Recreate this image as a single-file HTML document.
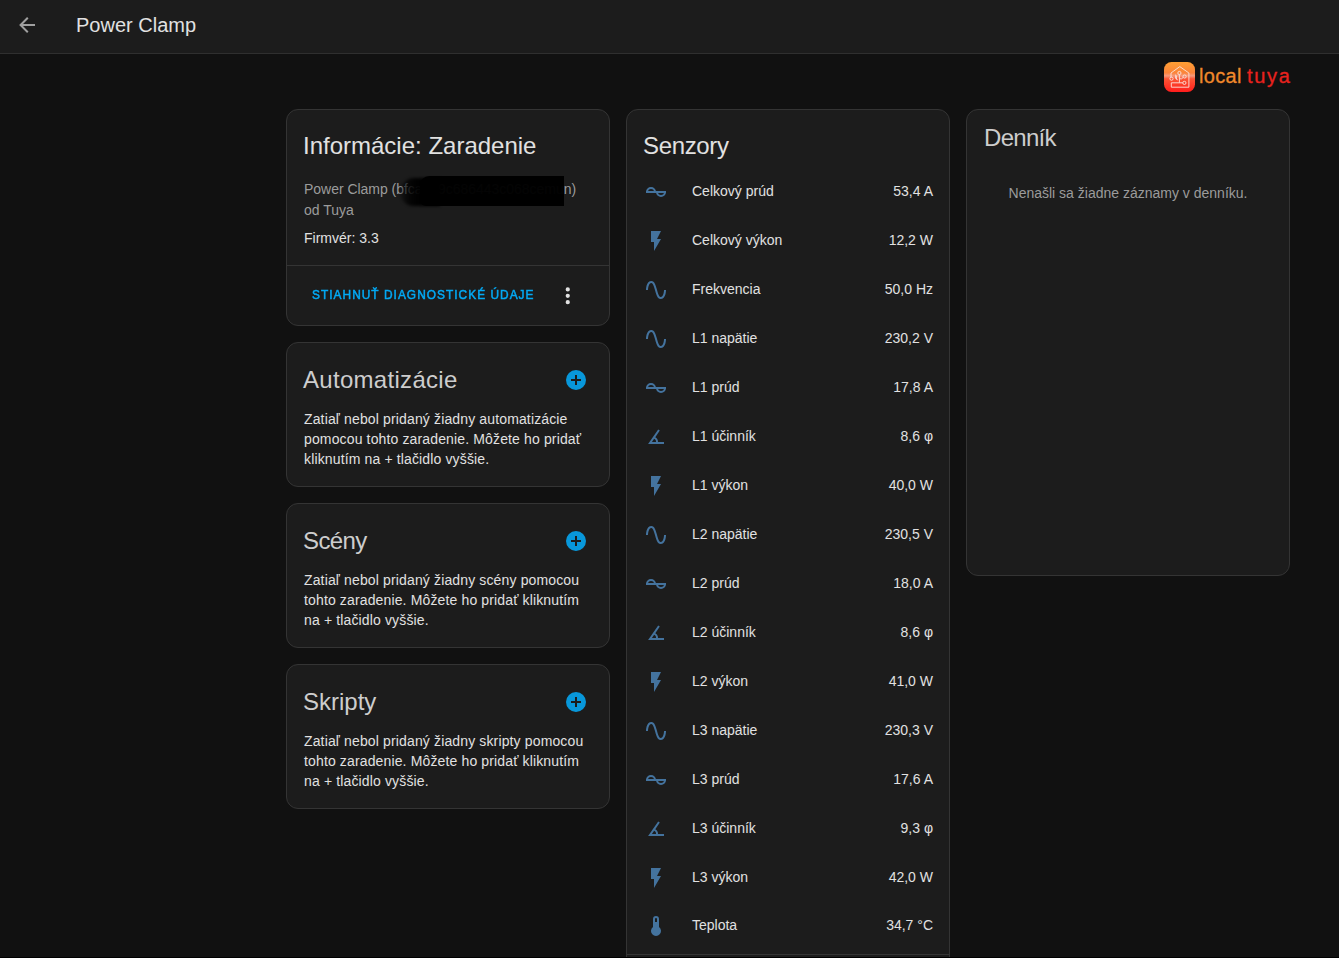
<!DOCTYPE html>
<html><head><meta charset="utf-8">
<style>
html,body{margin:0;padding:0;}
body{width:1339px;height:959px;overflow:hidden;background:#111111;position:relative;font-family:"Liberation Sans",sans-serif;color:#e1e1e1;}
.a{position:absolute;}
.t{position:absolute;white-space:nowrap;line-height:1;}
.hdr{position:absolute;left:0;top:0;width:1339px;height:53px;background:#1c1c1c;border-bottom:1px solid #2f2f2f;}
.card{position:absolute;box-sizing:border-box;background:#1c1c1c;border:1px solid #343434;border-radius:12px;width:324px;}
.h24{font-size:24px;}
.s14{font-size:14px;}
.bd{letter-spacing:0.14px;}
.sec{color:#9b9b9b;}
.gh{color:#cdcdcd;}
.ico{position:absolute;width:24px;height:24px;fill:#44739e;}
</style></head><body>

<div class="hdr"></div>
<svg class="a" style="left:15px;top:13px;width:24px;height:24px;fill:#a0a0a0" viewBox="0 0 24 24"><path d="M20,11V13H8L13.5,18.5L12.08,19.92L4.16,12L12.08,4.08L13.5,5.5L8,11H20Z"/></svg>
<div class="t" style="left:76px;top:15px;font-size:20px;color:#e1e1e1">Power Clamp</div>

<!-- local tuya logo -->
<svg class="a" style="left:1164px;top:62px;width:31px;height:30px" viewBox="0 0 31 30">
<defs>
<linearGradient id="lg" x1="0" y1="0" x2="0" y2="1">
<stop offset="0" stop-color="#ffa034"/>
<stop offset="0.36" stop-color="#fb843a"/>
<stop offset="0.46" stop-color="#f69a7c"/>
<stop offset="0.56" stop-color="#fb5634"/>
<stop offset="1" stop-color="#ff1c1c"/>
</linearGradient>
</defs>
<rect x="0" y="0" width="31" height="30" rx="7.5" fill="url(#lg)"/>
<g fill="none" stroke="#fbe3dc" stroke-width="0.9">
<path d="M7 15.5 V11 L15.8 4.6 L24.9 11 V25.2 H7.3 V20.8 H18.8"/>
<path d="M15.4 12.6 V20.6"/>
<path d="M15.4 16.8 L17.6 16.8 L19.2 15.4"/>
<circle cx="15.4" cy="11" r="1.6"/>
<circle cx="20.6" cy="14.5" r="1.6"/>
<circle cx="20.4" cy="20.9" r="1.6"/>
<circle cx="7.5" cy="16.7" r="1.6"/>
</g>
<path d="M11.2 12.2 C12.6 13 13.2 14.2 12.8 15.2 C12.6 16 13.4 17.2 14.2 18.4 C12.6 18 11.6 17.2 11.2 16 C11 14.8 11.6 13.6 11.2 12.2 Z" fill="#fbe3dc"/>
</svg>
<div class="t" style="left:1199px;top:66px;font-size:20px;color:#f0892b;-webkit-text-stroke:0.3px #f0892b;letter-spacing:0.3px">local</div>
<div class="t" style="left:1247px;top:66px;font-size:20px;color:#e8221e;-webkit-text-stroke:0.3px #e8221e;letter-spacing:1.7px">tuya</div>

<!-- Column 1 -->
<div class="card" style="left:286px;top:109px;height:217px"></div>
<div class="t h24" style="left:303px;top:134px">Informácie: Zaradenie</div>
<div class="t s14 sec" style="left:304px;top:182px;letter-spacing:-0.03px">Power Clamp (bfca319c686443c068cemun)</div>
<div class="a" style="left:400px;top:178px;width:40px;height:28px;background:linear-gradient(to right,rgba(0,0,0,0.25),rgba(0,0,0,0.8) 9px,rgba(0,0,0,0.97) 18px);border-radius:15px 0 0 14px;filter:blur(1.5px)"></div>
<div class="a" style="left:420px;top:176px;width:144px;height:30px;background:rgba(0,0,0,0.975);border-radius:9px 0 0 6px"></div>
<div class="t s14 sec" style="left:304px;top:203px">od Tuya</div>
<div class="t s14" style="left:304px;top:231px">Firmvér: 3.3</div>
<div class="a" style="left:287px;top:265px;width:322px;height:1px;background:#343434"></div>
<div class="t" style="left:312px;top:288px;font-size:13.5px;letter-spacing:1.17px;color:#03a9f4;-webkit-text-stroke:0.55px #03a9f4;transform:scaleX(0.88);transform-origin:0 0">STIAHNUŤ DIAGNOSTICKÉ ÚDAJE</div>
<svg class="a" style="left:555.25px;top:282.75px;width:25.5px;height:25.5px;fill:#e1e1e1" viewBox="0 0 24 24"><path d="M12,16A2,2 0 0,1 14,18A2,2 0 0,1 12,20A2,2 0 0,1 10,18A2,2 0 0,1 12,16M12,10A2,2 0 0,1 14,12A2,2 0 0,1 12,14A2,2 0 0,1 10,12A2,2 0 0,1 12,10M12,4A2,2 0 0,1 14,6A2,2 0 0,1 12,8A2,2 0 0,1 10,6A2,2 0 0,1 12,4Z"/></svg>

<div class="card" style="left:286px;top:342px;height:145px"></div>
<div class="t h24 gh" style="left:303px;top:368px;letter-spacing:0.3px">Automatizácie</div>
<svg class="a" style="left:564px;top:368px;width:24px;height:24px;fill:#0897da" viewBox="0 0 24 24"><path d="M17,13H13V17H11V13H7V11H11V7H13V11H17M12,2A10,10 0 0,0 2,12A10,10 0 0,0 12,22A10,10 0 0,0 22,12A10,10 0 0,0 12,2Z"/></svg>
<div class="t s14 bd" style="left:304px;top:412px">Zatiaľ nebol pridaný žiadny automatizácie</div>
<div class="t s14 bd" style="left:304px;top:432px">pomocou tohto zaradenie. Môžete ho pridať</div>
<div class="t s14 bd" style="left:304px;top:452px">kliknutím na + tlačidlo vyššie.</div>

<div class="card" style="left:286px;top:503px;height:145px"></div>
<div class="t h24 gh" style="left:303px;top:529px;letter-spacing:-0.6px">Scény</div>
<svg class="a" style="left:564px;top:529px;width:24px;height:24px;fill:#0897da" viewBox="0 0 24 24"><path d="M17,13H13V17H11V13H7V11H11V7H13V11H17M12,2A10,10 0 0,0 2,12A10,10 0 0,0 12,22A10,10 0 0,0 22,12A10,10 0 0,0 12,2Z"/></svg>
<div class="t s14 bd" style="left:304px;top:573px">Zatiaľ nebol pridaný žiadny scény pomocou</div>
<div class="t s14 bd" style="left:304px;top:593px">tohto zaradenie. Môžete ho pridať kliknutím</div>
<div class="t s14 bd" style="left:304px;top:613px">na + tlačidlo vyššie.</div>

<div class="card" style="left:286px;top:664px;height:145px"></div>
<div class="t h24 gh" style="left:303px;top:690px">Skripty</div>
<svg class="a" style="left:564px;top:690px;width:24px;height:24px;fill:#0897da" viewBox="0 0 24 24"><path d="M17,13H13V17H11V13H7V11H11V7H13V11H17M12,2A10,10 0 0,0 2,12A10,10 0 0,0 12,22A10,10 0 0,0 22,12A10,10 0 0,0 12,2Z"/></svg>
<div class="t s14 bd" style="left:304px;top:734px">Zatiaľ nebol pridaný žiadny skripty pomocou</div>
<div class="t s14 bd" style="left:304px;top:754px">tohto zaradenie. Môžete ho pridať kliknutím</div>
<div class="t s14 bd" style="left:304px;top:774px">na + tlačidlo vyššie.</div>

<!-- Column 2: Senzory -->
<div class="card" style="left:626px;top:109px;height:880px"></div>
<div class="t h24" style="left:643px;top:134px;letter-spacing:-0.35px">Senzory</div>
<svg class="ico" style="left:644px;top:180px" viewBox="0 0 24 24"><path d="M2 12H22" stroke="#44739e" stroke-width="2" fill="none"/><path d="M3 12A4 4 0 0 1 11 12" stroke="#44739e" stroke-width="2" fill="none"/><path d="M13 12A4 4 0 0 0 21 12" stroke="#44739e" stroke-width="2" fill="none"/></svg>
<div class="t s14" style="left:692px;top:184px">Celkový prúd</div>
<div class="t s14" style="right:406px;top:184px">53,4 A</div>
<svg class="ico" style="left:644px;top:229px" viewBox="0 0 24 24"><path d="M7,2V13H10V22L17,10H13L17,2H7Z"/></svg>
<div class="t s14" style="left:692px;top:233px">Celkový výkon</div>
<div class="t s14" style="right:406px;top:233px">12,2 W</div>
<svg class="ico" style="left:644px;top:278px" viewBox="0 0 24 24"><path d="M16.5,21C13.5,21 12.31,16.76 11.05,12.28C10.14,9.04 9,5 7.5,5C4.11,5 4,11.93 4,12H2C2,11.63 2.06,3 7.5,3C10.5,3 11.71,7.25 12.97,11.74C13.83,14.8 15,19 16.5,19C19.94,19 20.03,12.07 20.03,12H22.03C22.03,12.37 21.97,21 16.5,21Z"/></svg>
<div class="t s14" style="left:692px;top:282px">Frekvencia</div>
<div class="t s14" style="right:406px;top:282px">50,0 Hz</div>
<svg class="ico" style="left:644px;top:327px" viewBox="0 0 24 24"><path d="M16.5,21C13.5,21 12.31,16.76 11.05,12.28C10.14,9.04 9,5 7.5,5C4.11,5 4,11.93 4,12H2C2,11.63 2.06,3 7.5,3C10.5,3 11.71,7.25 12.97,11.74C13.83,14.8 15,19 16.5,19C19.94,19 20.03,12.07 20.03,12H22.03C22.03,12.37 21.97,21 16.5,21Z"/></svg>
<div class="t s14" style="left:692px;top:331px">L1 napätie</div>
<div class="t s14" style="right:406px;top:331px">230,2 V</div>
<svg class="ico" style="left:644px;top:376px" viewBox="0 0 24 24"><path d="M2 12H22" stroke="#44739e" stroke-width="2" fill="none"/><path d="M3 12A4 4 0 0 1 11 12" stroke="#44739e" stroke-width="2" fill="none"/><path d="M13 12A4 4 0 0 0 21 12" stroke="#44739e" stroke-width="2" fill="none"/></svg>
<div class="t s14" style="left:692px;top:380px">L1 prúd</div>
<div class="t s14" style="right:406px;top:380px">17,8 A</div>
<svg class="ico" style="left:644px;top:425px" viewBox="0 0 24 24"><path d="M20,19H4.09L14.18,4.43L15.82,5.57L11.28,12.13C12.89,12.96 14,14.62 14,16.54C14,16.7 14,16.85 13.97,17H20V19M7.91,17H11.96C12,16.85 12,16.7 12,16.54C12,15.28 11.24,14.22 10.14,13.78L7.91,17Z"/></svg>
<div class="t s14" style="left:692px;top:429px">L1 účinník</div>
<div class="t s14" style="right:406px;top:429px">8,6 φ</div>
<svg class="ico" style="left:644px;top:474px" viewBox="0 0 24 24"><path d="M7,2V13H10V22L17,10H13L17,2H7Z"/></svg>
<div class="t s14" style="left:692px;top:478px">L1 výkon</div>
<div class="t s14" style="right:406px;top:478px">40,0 W</div>
<svg class="ico" style="left:644px;top:523px" viewBox="0 0 24 24"><path d="M16.5,21C13.5,21 12.31,16.76 11.05,12.28C10.14,9.04 9,5 7.5,5C4.11,5 4,11.93 4,12H2C2,11.63 2.06,3 7.5,3C10.5,3 11.71,7.25 12.97,11.74C13.83,14.8 15,19 16.5,19C19.94,19 20.03,12.07 20.03,12H22.03C22.03,12.37 21.97,21 16.5,21Z"/></svg>
<div class="t s14" style="left:692px;top:527px">L2 napätie</div>
<div class="t s14" style="right:406px;top:527px">230,5 V</div>
<svg class="ico" style="left:644px;top:572px" viewBox="0 0 24 24"><path d="M2 12H22" stroke="#44739e" stroke-width="2" fill="none"/><path d="M3 12A4 4 0 0 1 11 12" stroke="#44739e" stroke-width="2" fill="none"/><path d="M13 12A4 4 0 0 0 21 12" stroke="#44739e" stroke-width="2" fill="none"/></svg>
<div class="t s14" style="left:692px;top:576px">L2 prúd</div>
<div class="t s14" style="right:406px;top:576px">18,0 A</div>
<svg class="ico" style="left:644px;top:621px" viewBox="0 0 24 24"><path d="M20,19H4.09L14.18,4.43L15.82,5.57L11.28,12.13C12.89,12.96 14,14.62 14,16.54C14,16.7 14,16.85 13.97,17H20V19M7.91,17H11.96C12,16.85 12,16.7 12,16.54C12,15.28 11.24,14.22 10.14,13.78L7.91,17Z"/></svg>
<div class="t s14" style="left:692px;top:625px">L2 účinník</div>
<div class="t s14" style="right:406px;top:625px">8,6 φ</div>
<svg class="ico" style="left:644px;top:670px" viewBox="0 0 24 24"><path d="M7,2V13H10V22L17,10H13L17,2H7Z"/></svg>
<div class="t s14" style="left:692px;top:674px">L2 výkon</div>
<div class="t s14" style="right:406px;top:674px">41,0 W</div>
<svg class="ico" style="left:644px;top:719px" viewBox="0 0 24 24"><path d="M16.5,21C13.5,21 12.31,16.76 11.05,12.28C10.14,9.04 9,5 7.5,5C4.11,5 4,11.93 4,12H2C2,11.63 2.06,3 7.5,3C10.5,3 11.71,7.25 12.97,11.74C13.83,14.8 15,19 16.5,19C19.94,19 20.03,12.07 20.03,12H22.03C22.03,12.37 21.97,21 16.5,21Z"/></svg>
<div class="t s14" style="left:692px;top:723px">L3 napätie</div>
<div class="t s14" style="right:406px;top:723px">230,3 V</div>
<svg class="ico" style="left:644px;top:768px" viewBox="0 0 24 24"><path d="M2 12H22" stroke="#44739e" stroke-width="2" fill="none"/><path d="M3 12A4 4 0 0 1 11 12" stroke="#44739e" stroke-width="2" fill="none"/><path d="M13 12A4 4 0 0 0 21 12" stroke="#44739e" stroke-width="2" fill="none"/></svg>
<div class="t s14" style="left:692px;top:772px">L3 prúd</div>
<div class="t s14" style="right:406px;top:772px">17,6 A</div>
<svg class="ico" style="left:644px;top:817px" viewBox="0 0 24 24"><path d="M20,19H4.09L14.18,4.43L15.82,5.57L11.28,12.13C12.89,12.96 14,14.62 14,16.54C14,16.7 14,16.85 13.97,17H20V19M7.91,17H11.96C12,16.85 12,16.7 12,16.54C12,15.28 11.24,14.22 10.14,13.78L7.91,17Z"/></svg>
<div class="t s14" style="left:692px;top:821px">L3 účinník</div>
<div class="t s14" style="right:406px;top:821px">9,3 φ</div>
<svg class="ico" style="left:644px;top:866px" viewBox="0 0 24 24"><path d="M7,2V13H10V22L17,10H13L17,2H7Z"/></svg>
<div class="t s14" style="left:692px;top:870px">L3 výkon</div>
<div class="t s14" style="right:406px;top:870px">42,0 W</div>
<svg class="ico" style="left:644px;top:914px" viewBox="0 0 24 24"><path d="M15 13V5A3 3 0 0 0 9 5V13A5 5 0 1 0 15 13M12 4A1 1 0 0 1 13 5V8H11V5A1 1 0 0 1 12 4Z"/></svg>
<div class="t s14" style="left:692px;top:918px">Teplota</div>
<div class="t s14" style="right:406px;top:918px">34,7 °C</div>
<div class="a" style="left:627px;top:954px;width:322px;height:1px;background:#343434"></div>

<!-- Column 3: Dennik -->
<div class="card" style="left:966px;top:109px;height:467px"></div>
<div class="t h24 gh" style="left:984px;top:126px;letter-spacing:-0.7px">Denník</div>
<div class="t s14 sec" style="left:966px;width:324px;text-align:center;top:186px">Nenašli sa žiadne záznamy v denníku.</div>

<div class="a" style="left:0;top:957px;width:1339px;height:1px;background:#000"></div>
<div class="a" style="left:0;top:958px;width:1339px;height:1px;background:#fff"></div>
</body></html>
